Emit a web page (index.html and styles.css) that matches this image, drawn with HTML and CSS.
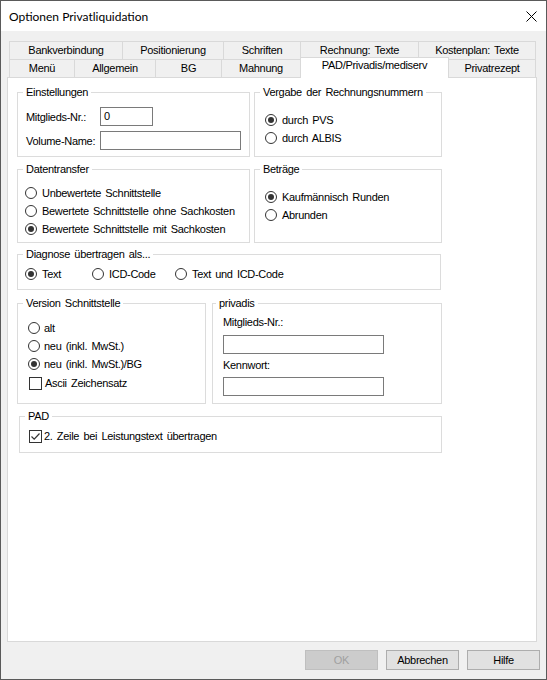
FILE: index.html
```html
<!DOCTYPE html>
<html lang="de">
<head>
<meta charset="utf-8">
<title>Optionen Privatliquidation</title>
<link rel="stylesheet" href="styles.css">
</head>
<body>
<div class="window">
  <div class="titlebar">
    <span class="title">Optionen Privatliquidation</span>
    <svg class="close" viewBox="0 0 11 11" width="11" height="11"><path d="M0.5 0.5 L10.5 10.5 M10.5 0.5 L0.5 10.5" stroke="#000" stroke-width="1" fill="none"/></svg>
  </div>
  <div class="client">
    <div class="tabs">
      <div class="tabrow">
        <div class="tab w-bank">Bankverbindung</div>
        <div class="tab w-pos">Positionierung</div>
        <div class="tab w-schr">Schriften</div>
        <div class="tab w-rech">Rechnung: Texte</div>
        <div class="tab w-kost last">Kostenplan: Texte</div>
      </div>
      <div class="tabrow">
        <div class="tab w-menu">Menü</div>
        <div class="tab w-allg">Allgemein</div>
        <div class="tab w-bg">BG</div>
        <div class="tab w-mahn">Mahnung</div>
        <div class="tab w-pad active">PAD/Privadis/mediserv</div>
        <div class="tab w-priv last">Privatrezept</div>
      </div>
    </div>
    <div class="panel">
      <div class="row row-a">
        <fieldset class="grp g-left">
          <legend class="cap">Einstellungen</legend>
          <div class="body b-einst">
            <div class="field"><span class="lbl">Mitglieds-Nr.:</span><div class="inp i-nr">0</div></div>
            <div class="field"><span class="lbl">Volume-Name:</span><div class="inp i-vol"></div></div>
          </div>
        </fieldset>
        <fieldset class="grp g-right">
          <legend class="cap">Vergabe der Rechnungsnummern</legend>
          <div class="body b-right">
            <div class="radio"><span class="dot on"></span>durch PVS</div>
            <div class="radio"><span class="dot"></span>durch ALBIS</div>
          </div>
        </fieldset>
      </div>
      <div class="row row-b">
        <fieldset class="grp g-left">
          <legend class="cap">Datentransfer</legend>
          <div class="body b-daten">
            <div class="radio"><span class="dot"></span>Unbewertete Schnittstelle</div>
            <div class="radio"><span class="dot"></span>Bewertete Schnittstelle ohne Sachkosten</div>
            <div class="radio"><span class="dot on"></span>Bewertete Schnittstelle mit Sachkosten</div>
          </div>
        </fieldset>
        <fieldset class="grp g-right">
          <legend class="cap">Beträge</legend>
          <div class="body b-right">
            <div class="radio"><span class="dot on"></span>Kaufmännisch Runden</div>
            <div class="radio"><span class="dot"></span>Abrunden</div>
          </div>
        </fieldset>
      </div>
      <div class="row row-c">
        <fieldset class="grp g-diag">
          <legend class="cap">Diagnose übertragen als...</legend>
          <div class="body b-diag">
            <div class="radio"><span class="dot on"></span>Text</div>
            <div class="radio"><span class="dot"></span>ICD-Code</div>
            <div class="radio"><span class="dot"></span>Text und ICD-Code</div>
          </div>
        </fieldset>
      </div>
      <div class="row row-d">
        <fieldset class="grp g-vers">
          <legend class="cap">Version Schnittstelle</legend>
          <div class="body b-vers">
            <div class="radio"><span class="dot"></span>alt</div>
            <div class="radio"><span class="dot"></span>neu (inkl. MwSt.)</div>
            <div class="radio"><span class="dot on"></span>neu (inkl. MwSt.)/BG</div>
            <div class="check c-ascii"><span class="box"></span>Ascii Zeichensatz</div>
          </div>
        </fieldset>
        <fieldset class="grp g-priv">
          <legend class="cap cap-priv">privadis</legend>
          <div class="body b-priv">
            <div class="plbl">Mitglieds-Nr.:</div>
            <div class="inp i-priv"></div>
            <div class="plbl plbl-2">Kennwort:</div>
            <div class="inp i-priv"></div>
          </div>
        </fieldset>
      </div>
      <div class="row row-e">
        <fieldset class="grp g-pad">
          <legend class="cap">PAD</legend>
          <div class="body b-pad">
            <div class="check"><span class="box on"><svg viewBox="0 0 11 11" width="11" height="11"><path d="M1.5 5.5 L4.2 8.2 L9.5 2.5" stroke="#333" stroke-width="1.2" fill="none"/></svg></span>2. Zeile bei Leistungstext übertragen</div>
          </div>
        </fieldset>
      </div>
    </div>
    <div class="buttons">
      <div class="btn disabled">OK</div>
      <div class="btn">Abbrechen</div>
      <div class="btn">Hilfe</div>
    </div>
  </div>
</div>
</body>
</html>
```

FILE: styles.css
```css
* { box-sizing: border-box; }
html, body { margin: 0; padding: 0; background: #fff; }
body {
  font-family: "Liberation Sans", Arial, sans-serif;
  font-size: 11px;
  letter-spacing: -0.3px;
  word-spacing: 1.5px;
  color: #000;
}
.window {
  width: 547px;
  height: 680px;
  border: 1px solid #5a5a5a;
  background: #f0f0f0;
  display: flex;
  flex-direction: column;
}
.titlebar {
  height: 30px;
  flex: none;
  background: #fff;
  display: flex;
  align-items: center;
  padding-left: 8px;
}
.title {
  flex: 1;
  font-family: "Lato", "Noto Sans", sans-serif;
  font-size: 12px;
  letter-spacing: 0;
  word-spacing: 0;
  padding-top: 1px;
}
.close { margin-right: 9px; margin-top: 1px; }

.client {
  flex: 1;
  padding: 10px 6px 0 6px;
  display: flex;
  flex-direction: column;
}

/* tabs */
.tabs { margin-left: 2px; }
.tabrow { display: flex; height: 18px; }
.tab {
  height: 18px;
  border-top: 1px solid #d9d9d9;
  border-left: 1px solid #d9d9d9;
  background: #f0f0f0;
  text-align: center;
  line-height: 17px;
  white-space: nowrap;
}
.tab.last { border-right: 1px solid #d9d9d9; }
.tab.active {
  background: #fff;
  height: 21px;
  margin-top: -2px;
  margin-right: -1px;
  border-right: 1px solid #d9d9d9;
  position: relative;
  z-index: 1;
  line-height: 15px;
}
.w-bank { width: 113px; }
.w-pos { width: 101px; }
.w-schr { width: 77px; }
.w-rech { width: 118px; }
.w-kost { width: 118px; }
.w-menu { width: 65px; }
.w-allg { width: 81px; }
.w-bg { width: 66px; }
.w-mahn { width: 79px; }
.w-pad { width: 149px; }
.w-priv { width: 88px; }

/* panel */
.panel {
  width: 530px;
  height: 565px;
  flex: none;
  background: #fff;
  border: 1px solid #d9d9d9;
  padding: 8px 0 0 9px;
}
.row { display: flex; }
.row-a { gap: 4px; }
.row-b { gap: 4px; margin-top: 6px; }
.row-c { margin-top: 5px; }
.row-d { gap: 6px; margin-top: 7px; }
.row-e { margin-top: 6px; }

.grp {
  margin: 0;
  padding: 0;
  min-width: 0;
  border: 1px solid #dcdcdc;
}
.cap {
  padding: 0 3px;
  margin-left: 5px;
  line-height: 13px;
  height: 13px;
  white-space: nowrap;
}
.cap-priv { margin-left: 3px; }
.g-left { width: 233px; }
.g-right { width: 188px; }
.g-diag { width: 424px; }
.g-vers { width: 189px; }
.g-priv { width: 230px; }
.g-pad { width: 423px; margin-left: 2px; }

.b-einst { padding: 8px 8px 6px 8px; }
.field { display: flex; align-items: center; height: 19px; }
.field + .field { margin-top: 5px; }
.lbl { width: 74px; flex: none; white-space: nowrap; }
.inp {
  height: 19px;
  border: 1px solid #7a7a7a;
  background: #fff;
  padding-left: 3px;
  line-height: 17px;
}
.i-nr { width: 53px; }
.i-vol { width: 143px; }

.b-right { padding: 12px 0 0 10px; }
.b-daten { padding: 8px 0 4px 7px; }
.b-diag {
  padding: 4px 0 6px 7px;
  display: grid;
  grid-template-columns: 67px 83px auto;
}
.b-vers { padding: 9px 0 0 10px; }
.b-priv { padding: 6px 0 7px 10px; }
.b-pad { padding: 4px 0 7px 9px; }

.radio, .check {
  display: flex;
  align-items: center;
  height: 18px;
  white-space: nowrap;
}
.dot {
  flex: none;
  width: 12px;
  height: 12px;
  border: 1px solid #333;
  border-radius: 50%;
  background: #fff;
  margin-right: 5px;
  display: flex;
  align-items: center;
  justify-content: center;
}
.dot.on::after {
  content: "";
  width: 6px;
  height: 6px;
  border-radius: 50%;
  background: #333;
}
.b-vers .dot { margin-right: 4px; }
.box {
  flex: none;
  width: 13px;
  height: 13px;
  border: 1px solid #333;
  background: #fff;
  margin-right: 2px;
  display: flex;
  align-items: center;
  justify-content: center;
}
.c-ascii { margin-top: 1px; margin-left: 1px; }
.c-ascii .box { margin-right: 3px; }

.plbl { line-height: 13px; height: 13px; white-space: nowrap; }
.plbl-2 { margin-top: 5px; }
.i-priv { width: 161px; margin-top: 6px; }
.plbl-2 + .i-priv { margin-top: 5px; }

/* buttons */
.buttons {
  display: flex;
  justify-content: flex-end;
  gap: 8px;
  margin-top: 8px;
}
.btn {
  width: 73px;
  height: 20px;
  border: 1px solid #adadad;
  background: #e1e1e1;
  text-align: center;
  line-height: 18px;
}
.btn.disabled {
  background: #cccccc;
  border-color: #bfbfbf;
  color: #a0a0a0;
}
```
